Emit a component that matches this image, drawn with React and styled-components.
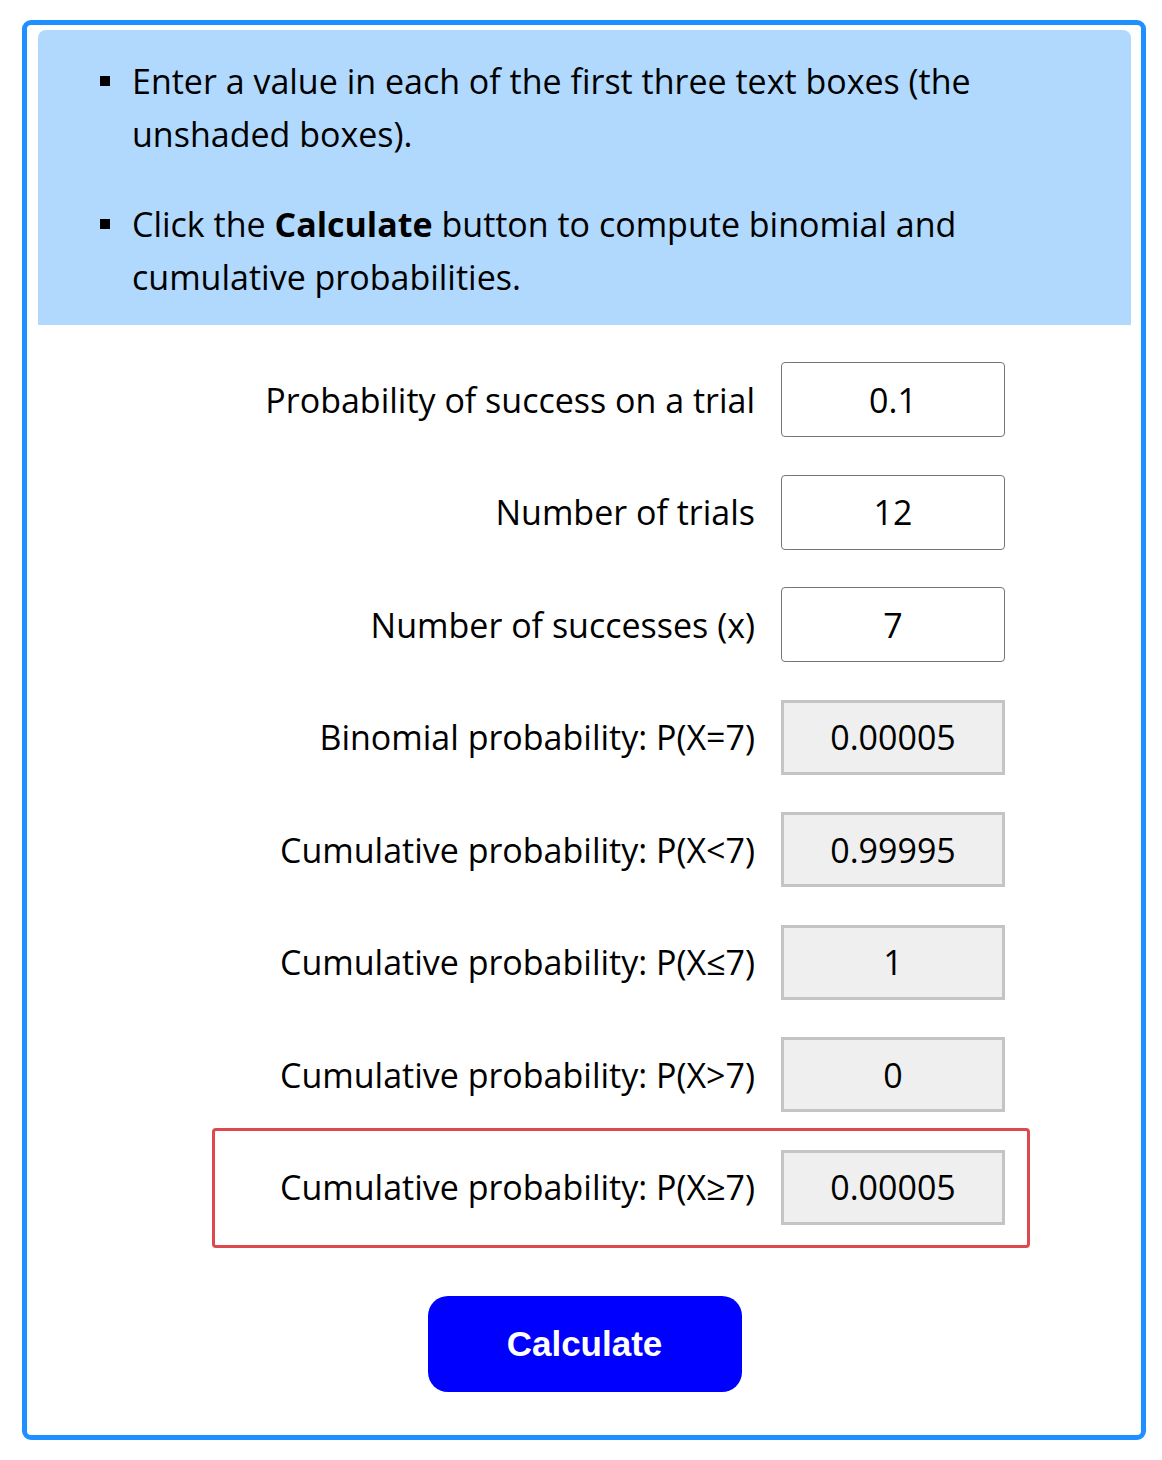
import React from "react";
import styled, { createGlobalStyle } from "styled-components";

const Global = createGlobalStyle`
  html, body { margin: 0; padding: 0; background: #fff; }
  body { font-family: "Open Sans", "Noto Sans", sans-serif; color: #000; }
`;

const Frame = styled.div`
  box-sizing: border-box;
  width: 1124px;
  margin: 20px 0 20px 22px;
  border: 5px solid #1e90ff;
  border-radius: 9px;
  padding: 5px 10px 43px 11px;
`;

const Instructions = styled.div`
  background: #b1d9fd;
  border-radius: 8px 8px 0 0;
  padding: 25px 60px 21px 62px;
`;

const List = styled.ul`
  margin: 0;
  padding: 0;
  list-style: none;
  font-size: 34px;
  line-height: 53px;
`;

const Item = styled.li`
  display: flex;
  align-items: flex-start;
  & + & { margin-top: 37px; }
`;

const Bullet = styled.span`
  flex: none;
  width: 10px;
  height: 10px;
  margin: 21px 22px 0 0;
  background: #000;
`;

const Form = styled.div`
  display: flex;
  flex-direction: column;
  width: 818px;
  margin: 18.25px 0 0 174px;
`;

const Row = styled.div`
  box-sizing: border-box;
  display: flex;
  align-items: center;
  justify-content: flex-end;
  gap: 26px;
  border: 3px solid ${p => (p.$highlight ? "#dc4a4d" : "transparent")};
  border-radius: 4px;
  padding: ${p => (p.$highlight ? "19px 22px 20px 0" : "15.75px 22px 15.75px 0")};
  margin: ${p => (p.$highlight ? "-3.25px 0 -4.25px" : "0")};
`;

const Label = styled.label`
  font-size: 34px;
  text-align: right;
  white-space: nowrap;
`;

const Field = styled.div`
  box-sizing: border-box;
  width: 224px;
  height: 75px;
  display: flex;
  align-items: center;
  justify-content: center;
  font-size: 34px;
  background: ${p => (p.$output ? "#efefef" : "#fff")};
  border: ${p => (p.$output ? "3px solid #c4c4c4" : "1px solid #767676")};
  border-radius: ${p => (p.$output ? "0" : "4px")};
`;

const ButtonRow = styled.div`
  display: flex;
  justify-content: center;
  margin-top: 53px;
`;

const CalcButton = styled.button`
  width: 314px;
  height: 96px;
  background: #0000ff;
  color: #fff;
  border: none;
  border-radius: 20px;
  font-family: "Liberation Sans", Arial, sans-serif;
  font-weight: bold;
  font-size: 35px;
  cursor: pointer;
`;

const rows = [
  { label: "Probability of success on a trial", value: "0.1" },
  { label: "Number of trials", value: "12" },
  { label: "Number of successes (x)", value: "7" },
  { label: "Binomial probability: P(X=7)", value: "0.00005", output: true },
  { label: "Cumulative probability: P(X<7)", value: "0.99995", output: true },
  { label: "Cumulative probability: P(X\u22647)", value: "1", output: true },
  { label: "Cumulative probability: P(X>7)", value: "0", output: true },
  { label: "Cumulative probability: P(X\u22657)", value: "0.00005", output: true, highlight: true },
];

export default function App() {
  return (
    <>
      <Global />
      <Frame>
        <Instructions>
          <List>
            <Item>
              <Bullet />
              <span>Enter a value in each of the first three text boxes (the unshaded boxes).</span>
            </Item>
            <Item>
              <Bullet />
              <span>
                Click the <b>Calculate</b> button to compute binomial and cumulative probabilities.
              </span>
            </Item>
          </List>
        </Instructions>
        <Form>
          {rows.map(r => (
            <Row key={r.label} $highlight={r.highlight}>
              <Label>{r.label}</Label>
              <Field $output={r.output}>{r.value}</Field>
            </Row>
          ))}
        </Form>
        <ButtonRow>
          <CalcButton>Calculate</CalcButton>
        </ButtonRow>
      </Frame>
    </>
  );
}
